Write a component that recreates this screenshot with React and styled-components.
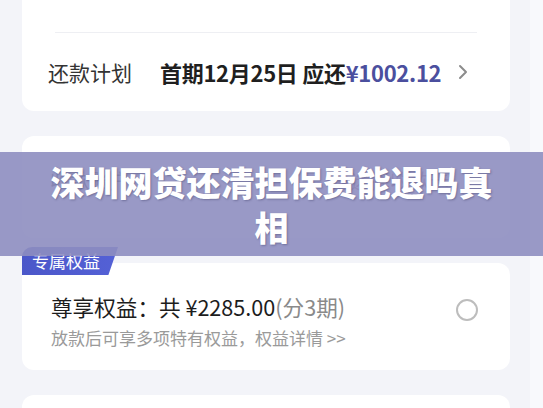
import React from "react";
import styled, { createGlobalStyle } from "styled-components";

const GlobalStyle = createGlobalStyle`
  html, body {
    margin: 0;
    padding: 0;
    background: #f8f9fc;
    font-family: "Noto Sans CJK SC", "Noto Sans", sans-serif;
  }
  #root {
    position: relative;
    width: 543px;
    height: 408px;
    overflow: hidden;
  }
`;

const Page = styled.div`
  width: 488px;
  height: 408px;
  padding: 0 20px 0 22px;
  background: #f3f4f9;
  display: flex;
  flex-direction: column;
  gap: ${({ gap = "25px" }) => gap};
`;

const Card = styled.div`
  position: relative;
  flex-shrink: 0;
  background: #fff;
  border-radius: ${({ radius = "12px" }) => radius};
  height: ${({ h }) => h};
  box-sizing: border-box;
`;

const Divider = styled.div`
  margin: 0 33px;
  padding-top: 32px;
  border-bottom: 1px solid #eeeff3;
`;

const PlanRow = styled.div`
  display: flex;
  align-items: center;
  height: 78px;
  padding: 0 0 0 26px;
`;

const Label = styled.span`
  font-size: 21px;
  color: #333;
  width: 112px;
`;

const PlanValue = styled.span`
  font-size: 22px;
  font-weight: 700;
  color: #1f1f1f;
  letter-spacing: -0.3px;
`;

const Money = styled.span`
  color: #4b4f9e;
`;

const Chevron = styled.svg`
  margin-left: 17px;
`;

const MutedRow = styled.div`
  display: flex;
  justify-content: space-between;
  padding: 30px 60px 0 28px;
  font-size: 20px;
  color: #444;
`;

const Reddish = styled.span`
  color: #b0707a;
`;

const Tag = styled.div`
  position: absolute;
  top: -16px;
  left: 0;
  height: 28px;
  width: 96px;
  padding-left: 10px;
  box-sizing: border-box;
  background: linear-gradient(90deg, #4b57c9, #5461d6);
  clip-path: polygon(0 18%, 6% 0, 100% 0, 90% 100%, 0 100%);
  border-radius: 10px 0 0 0;
  color: #fff;
  font-size: 17px;
  line-height: 28px;
`;

const Benefit = styled.div`
  display: flex;
  align-items: center;
  padding: 29px 32px 0 29px;
`;

const BenefitText = styled.div`
  flex: 1;
  display: flex;
  flex-direction: column;
  gap: 4px;
`;

const BenefitTitle = styled.div`
  font-size: 21.6px;
  color: #1d1d1d;
  line-height: 30px;
`;

const Gray = styled.span`
  color: #8a8a8a;
`;

const BenefitSub = styled.div`
  font-size: 17px;
  color: #9a9a9a;
  line-height: 24px;
`;

const Radio = styled.div`
  width: 18px;
  height: 18px;
  border: 2px solid #bdbdbd;
  border-radius: 50%;
  margin-top: -22px;
`;

const Banner = styled.div`
  position: absolute;
  left: 0;
  top: 152px;
  width: 543px;
  height: 104px;
  background: rgba(142, 142, 192, 0.9);
  display: flex;
  align-items: center;
  justify-content: center;
  box-sizing: border-box;
  padding: 0 48px;
`;

const Title = styled.h1`
  margin: 0;
  text-align: center;
  color: #fff;
  font-size: 34px;
  font-weight: 900;
  line-height: 45px;
  text-shadow: 1px 1px 2px rgba(40, 40, 80, 0.35);
`;

export default function App() {
  return (
    <>
      <GlobalStyle />
      <Page>
        <Card radius="0 0 12px 12px" h="111px">
          <Divider />
          <PlanRow>
            <Label>还款计划</Label>
            <PlanValue>
              首期12月25日 应还<Money>¥1002.12</Money>
            </PlanValue>
            <Chevron width="10" height="16" viewBox="0 0 10 16">
              <path d="M2 2l6 6-6 6" fill="none" stroke="#8c8c8c" strokeWidth="2" strokeLinecap="round" strokeLinejoin="round" />
            </Chevron>
          </PlanRow>
        </Card>
        <Card h="102px">
          <MutedRow>
            <span>收款账户</span>
            <Reddish>请选择收款卡</Reddish>
          </MutedRow>
        </Card>
        <Card h="107px">
          <Tag>专属权益</Tag>
          <Benefit>
            <BenefitText>
              <BenefitTitle>
                尊享权益：共 ¥2285.00<Gray>(分3期)</Gray>
              </BenefitTitle>
              <BenefitSub>放款后可享多项特有权益，权益详情 &gt;&gt;</BenefitSub>
            </BenefitText>
            <Radio />
          </Benefit>
        </Card>
        <Card h="40px" />
      </Page>
      <Banner>
        <Title>深圳网贷还清担保费能退吗真相</Title>
      </Banner>
    </>
  );
}
